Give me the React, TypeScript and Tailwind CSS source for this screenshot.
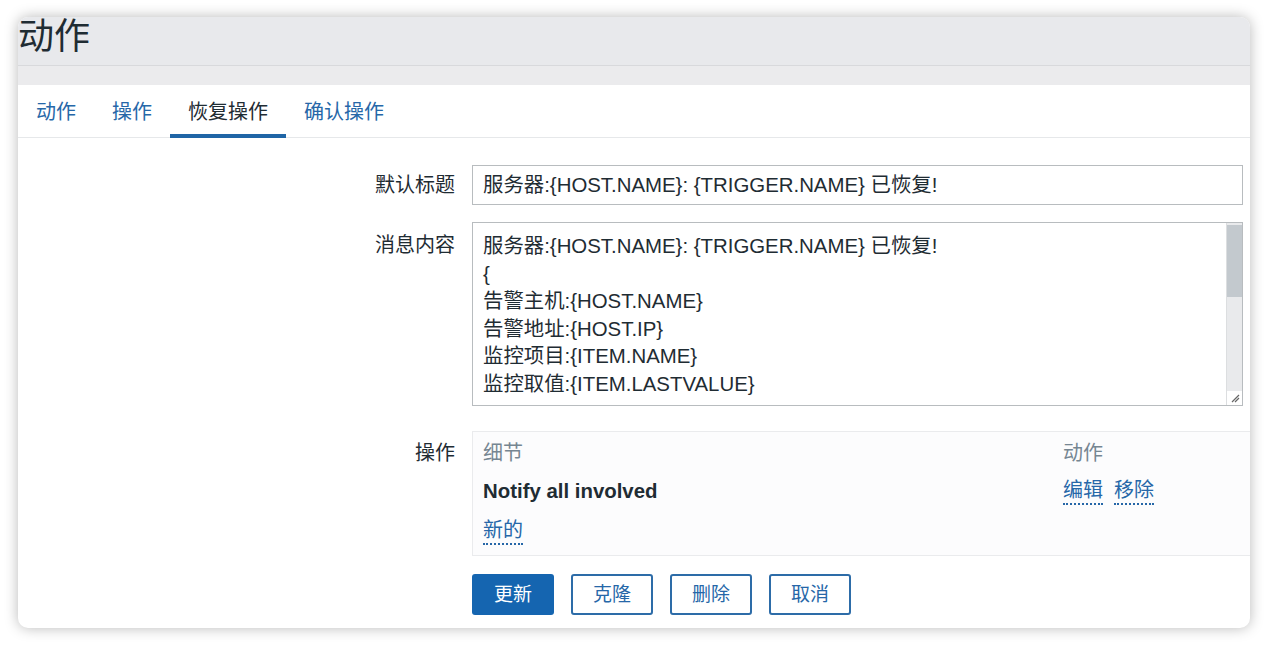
import React from "react";

const tabs = ["动作", "操作", "恢复操作", "确认操作"];

const messageLines = [
    "服务器:{HOST.NAME}: {TRIGGER.NAME} 已恢复!",
    "{",
    "告警主机:{HOST.NAME}",
    "告警地址:{HOST.IP}",
    "监控项目:{ITEM.NAME}",
    "监控取值:{ITEM.LASTVALUE}",
];

const font = { fontFamily: '"Liberation Sans", "Noto Sans CJK SC", sans-serif' };

const LinkText = ({ children }: { children: React.ReactNode }) => (
    <span className="text-[#2667a8] border-b-2 border-dotted border-[#2667a8] leading-[25px] cursor-pointer">
        {children}
    </span>
);

const App = () => {
    return (
        <div className="w-[1268px] h-[646px] bg-white pt-[17px] pl-[18px]" style={font}>
            <div className="w-[1232px] h-[611px] rounded-[10px] overflow-hidden bg-white shadow-[0_0_14px_rgba(0,0,0,0.28)] flex flex-col">
                {/* header */}
                <div className="h-[49px] bg-[#e8e9ec] border-b border-[#d8d9dc] flex items-start">
                    <h1 className="text-[36px] leading-[40px] text-[#1f2c33] whitespace-nowrap">动作</h1>
                </div>
                <div className="h-[19px] bg-[#ebebed]" />

                {/* tabs */}
                <div className="h-[53px] flex items-end border-b border-[#e6e8ea]">
                    {tabs.map((t, i) => (
                        <div
                            key={t}
                            className={
                                i === 2
                                    ? "px-[18px] h-[50px] flex items-center text-[20px] text-[#1f2c33] border-b-4 border-[#1f65a6] pt-[1px] -mb-[1px]"
                                    : "px-[18px] h-[50px] flex items-center text-[20px] text-[#2667a8] border-b-4 border-transparent pt-[1px] -mb-[1px]"
                            }
                        >
                            {t}
                        </div>
                    ))}
                </div>

                {/* form */}
                <div className="flex flex-col pt-[27px] text-[20.4px] text-[#1f2c33]">
                    <div className="flex items-center">
                        <div className="w-[454px] text-right pr-[17px] text-[20px]">默认标题</div>
                        <div className="w-[771px] h-[40px] border border-[#b8bcbf] flex items-center px-[10px]">
                            服务器:{"{HOST.NAME}"}: {"{TRIGGER.NAME}"} 已恢复!
                        </div>
                    </div>

                    <div className="flex items-start mt-[17px]">
                        <div className="w-[454px] text-right pr-[17px] pt-[8px] text-[20px]">消息内容</div>
                        <div className="w-[771px] h-[184px] border border-[#b8bcbf] flex">
                            <div className="flex-1 pl-[10px] pt-[10px] leading-[27.6px] overflow-hidden">
                                {messageLines.map((l) => (
                                    <div key={l}>{l}</div>
                                ))}
                            </div>
                            <div className="w-[16px] flex flex-col bg-[#e9eaec] border-l border-[#dcdee0]">
                                <div className="h-[72px] mt-[2px] bg-[#c3c9ce]" />
                                <div className="flex-1" />
                                <div className="h-[14px] bg-white flex items-center justify-center">
                                    <svg width="10" height="10" viewBox="0 0 10 10">
                                        <path d="M9 2 L2 9 M9 5 L5 9" stroke="#666" strokeWidth="1.2" />
                                    </svg>
                                </div>
                            </div>
                        </div>
                    </div>

                    <div className="flex items-start mt-[25px]">
                        <div className="w-[454px] text-right pr-[17px] pt-[7px] text-[20px]">操作</div>
                        <div className="flex-1 h-[125px] border border-r-0 border-[#eaebed] bg-[#fcfcfd] pl-[10px] pt-[6px]">
                            <div className="flex h-[30px] items-center text-[#768692] text-[20px]">
                                <div className="w-[580px]">细节</div>
                                <div>动作</div>
                            </div>
                            <div className="flex h-[46px] items-center">
                                <div className="w-[580px] font-bold">Notify all involved</div>
                                <div className="flex gap-[11px] text-[20px]">
                                    <LinkText>编辑</LinkText>
                                    <LinkText>移除</LinkText>
                                </div>
                            </div>
                            <div className="flex h-[34px] items-center text-[20px]">
                                <LinkText>新的</LinkText>
                            </div>
                        </div>
                    </div>

                    <div className="flex gap-[17px] pl-[454px] mt-[18px]">
                        <button className="w-[82px] h-[41px] rounded-[3px] bg-[#1565b0] text-white text-[19px] pt-[2px]">更新</button>
                        {["克隆", "删除", "取消"].map((b) => (
                            <button
                                key={b}
                                className="w-[82px] h-[41px] rounded-[3px] border-2 border-[#2d6ca8] bg-white text-[#2667a8] text-[19px] pt-[2px]"
                            >
                                {b}
                            </button>
                        ))}
                    </div>
                </div>
            </div>
        </div>
    );
};

export default App;
